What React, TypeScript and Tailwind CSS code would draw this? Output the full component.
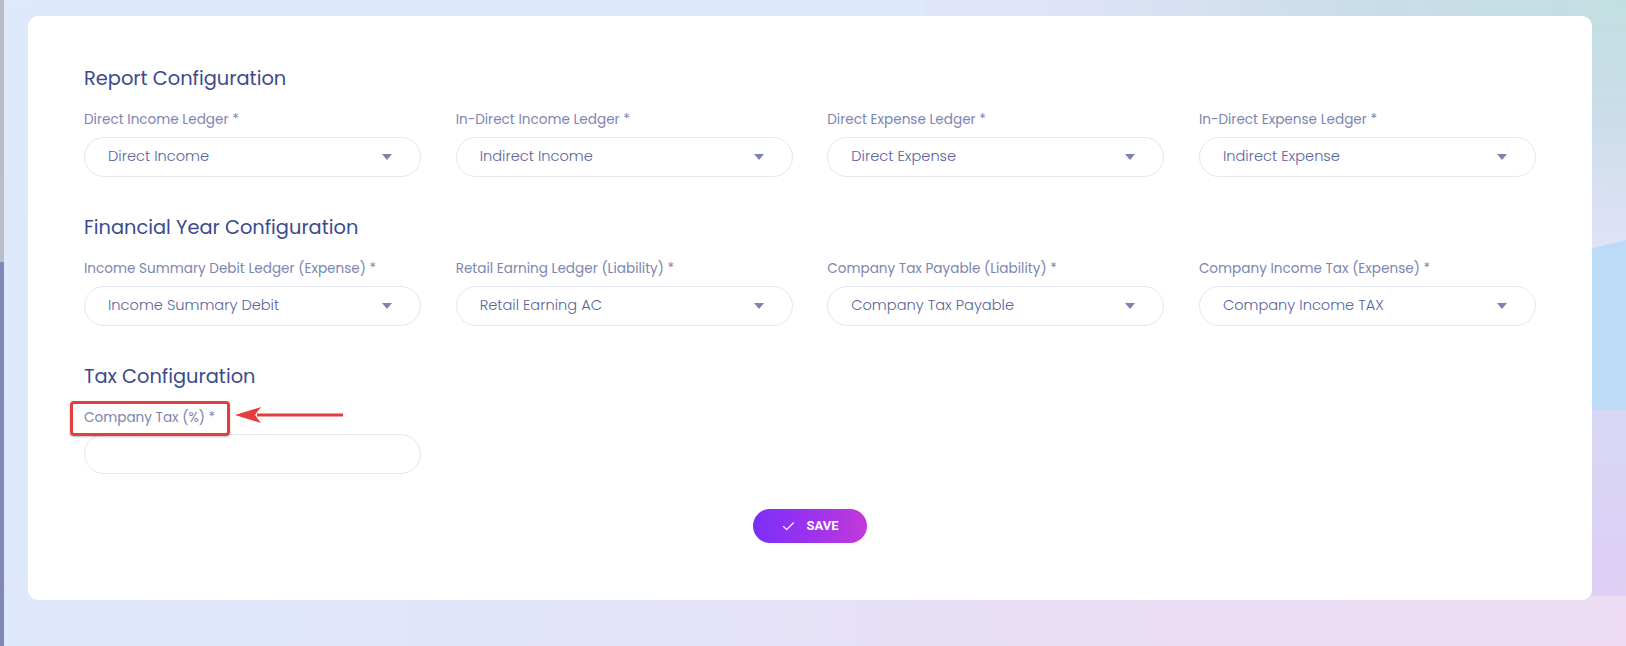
import { Check } from "lucide-react";

type Field = { label: string; value: string };

const sections: { title: string; fields: Field[] }[] = [
  {
    title: "Report Configuration",
    fields: [
      { label: "Direct Income Ledger *", value: "Direct Income" },
      { label: "In-Direct Income Ledger *", value: "Indirect Income" },
      { label: "Direct Expense Ledger *", value: "Direct Expense" },
      { label: "In-Direct Expense Ledger *", value: "Indirect Expense" },
    ],
  },
  {
    title: "Financial Year Configuration",
    fields: [
      { label: "Income Summary Debit Ledger (Expense) *", value: "Income Summary Debit" },
      { label: "Retail Earning Ledger (Liability) *", value: "Retail Earning AC" },
      { label: "Company Tax Payable (Liability) *", value: "Company Tax Payable" },
      { label: "Company Income Tax (Expense) *", value: "Company Income TAX" },
    ],
  },
];

const SelectBox = ({ field }: { field: Field }) => (
  <div className="flex flex-col">
    <label className="block text-[13.6px] leading-[20px] text-[#7d85b1] mb-[7px]">
      {field.label}
    </label>
    <div className="h-[40px] rounded-full border border-[#e5e7f1] flex items-center justify-between pl-[23px] pr-[28px] cursor-pointer">
      <span className="text-[14.6px] font-light text-[#5a639b]">{field.value}</span>
      <svg width="10" height="6" viewBox="0 0 10 6">
        <path d="M0 0 L10 0 L5 6 Z" fill="#7c84ad" />
      </svg>
    </div>
  </div>
);

const App = () => {
  return (
    <div className="relative w-full h-[646px] overflow-hidden flex bg-[#dde8fb] bg-[linear-gradient(165deg,#dfe9fc_0%,#dde8fb_50%,#e4e3f8_80%,#ebdcf4_100%)] font-['Poppins','Inter',sans-serif]">
      {/* background shapes */}
      <div className="absolute right-0 top-0 w-[700px] h-[300px] bg-[radial-gradient(ellipse_at_top_right,#c1dfe0_0%,#c9dde9_25%,rgba(228,224,247,0.6)_60%,transparent_100%)]" />
      <div className="absolute right-0 top-[240px] w-[120px] h-[180px] bg-[#bddbf6] [clip-path:polygon(0%_16%,100%_0%,100%_100%,0%_94%)]" />
      <div className="absolute right-0 top-[410px] w-[120px] h-[236px] bg-[linear-gradient(180deg,#d8d8f5_0%,#dccff4_70%,#e6d6f4_100%)]" />
      <div className="absolute left-0 right-0 bottom-0 h-[50px] bg-[linear-gradient(90deg,#dfe9fc_0%,#e3e3f9_40%,#eadcf4_75%,#eddcf4_100%)]" />

      <div className="relative z-10 w-[4px] flex flex-col">
        <div className="h-[262px] bg-[#b9bdc7]" />
        <div className="flex-1 bg-[#8188b6]" />
      </div>

      <div className="relative z-10 ml-[24px] mt-[16px] w-[1564px] h-[584px] bg-white rounded-[10px] px-[56px] pt-[49px]">
        {sections.map((section) => (
          <div key={section.title} className="mb-[37px]">
            <h2 className="text-[19.4px] leading-[28px] text-[#3b4a8d] mb-[17px]">
              {section.title}
            </h2>
            <div className="grid grid-cols-4 gap-x-[34.5px]">
              {section.fields.map((field) => (
                <SelectBox key={field.label} field={field} />
              ))}
            </div>
          </div>
        ))}

        <div>
          <h2 className="text-[19.4px] leading-[28px] text-[#3b4a8d] mb-[17px]">
            Tax Configuration
          </h2>
          <div className="grid grid-cols-4 gap-x-[34.5px]">
            <div className="flex flex-col">
              <div className="relative mb-[6px] h-[20px]">
                <label className="block text-[13.6px] leading-[20px] text-[#7d85b1]">
                  Company Tax (%) *
                </label>
                <div className="absolute left-[-14px] top-[-7px] w-[160px] h-[35px] border-[3px] border-[#e53d3d] rounded-[4px] shadow-[0_1px_2px_rgba(0,0,0,0.25)]" />
                <svg
                  className="absolute left-[151px] top-[-2px]"
                  width="110"
                  height="18"
                  viewBox="0 0 110 18"
                >
                  <path d="M22 7.5 H108 V10.5 H22 Z" fill="#e53d3d" />
                  <path d="M0 9 L26 1 L20 9 L26 17 Z" fill="#e53d3d" />
                </svg>
              </div>
              <input
                type="text"
                className="h-[40px] rounded-full border border-[#e5e7f1] px-[23px] outline-none text-[15px]"
              />
            </div>
          </div>
        </div>

        <div className="flex justify-center mt-[35px]">
          <button className="w-[114px] h-[34px] rounded-full bg-[linear-gradient(90deg,#7b2ff7_0%,#a032ec_55%,#c23ad9_100%)] flex items-center justify-center gap-[10px] text-white text-[13px] font-bold font-['Roboto',sans-serif]">
            <Check size={15} strokeWidth={1.8} />
            SAVE
          </button>
        </div>
      </div>
    </div>
  );
};

export default App;
